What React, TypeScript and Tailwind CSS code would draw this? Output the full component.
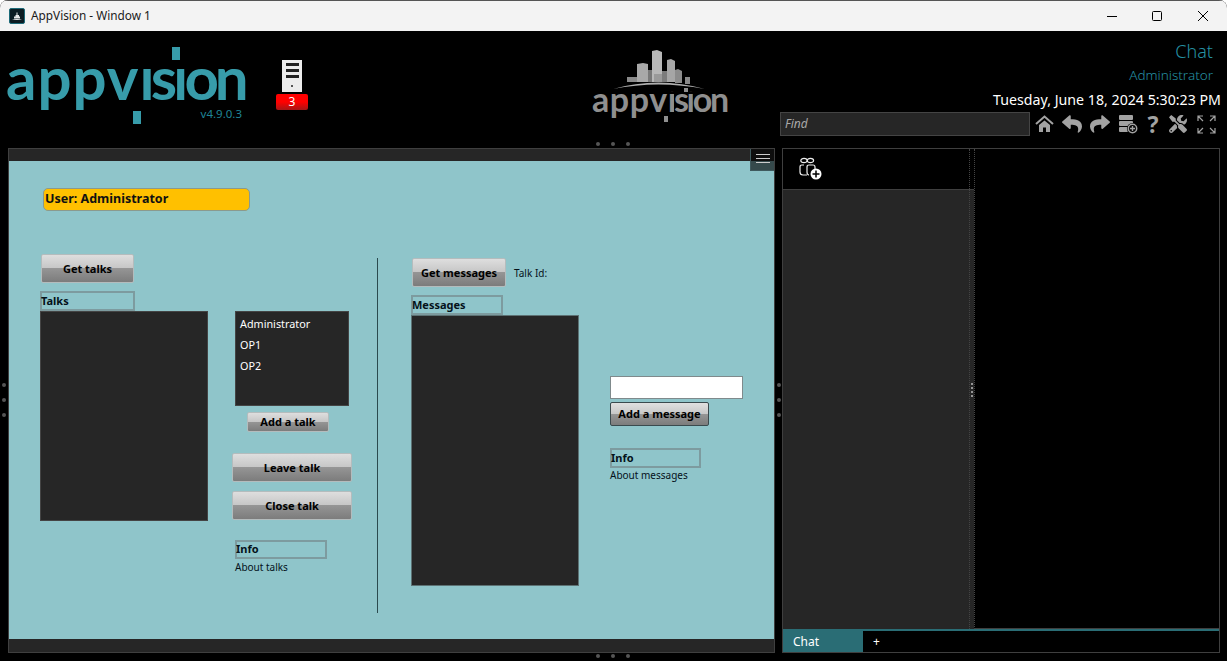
import { FaReply, FaShare, FaTools } from "react-icons/fa";

const FONT = "[font-family:'Noto_Sans','Open_Sans',sans-serif]";

function Btn({ label, className }: { label: string; className: string }) {
  return (
    <button className={`flex shrink-0 items-center justify-center rounded-[2px] border border-[#b4bcbd] bg-[linear-gradient(#dedede_0%,#c6c6c6_49%,#959595_50%,#7c7c7c_100%)] text-[11px] font-bold text-black ${className}`}>
      {label}
    </button>
  );
}

function LabelBox({ label, className }: { label: string; className: string }) {
  return (
    <div className={`flex shrink-0 items-center border-2 border-[#7d9b9f] pb-[2px] text-[11px] leading-none font-bold text-[#04121a] [text-indent:-1px] ${className}`}>
      {label}
    </div>
  );
}

function Dots({ className }: { className: string }) {
  return (
    <div className={`absolute z-10 flex gap-[11px] ${className}`}>
      <span className="size-[4px] rounded-full bg-[#555]" />
      <span className="size-[4px] rounded-full bg-[#555]" />
      <span className="size-[4px] rounded-full bg-[#555]" />
    </div>
  );
}

function AppLogo() {
  return (
    <div className="relative h-[78px] w-[240px] shrink-0">
      <div className="absolute top-0 left-[4px] text-[60px] leading-[60px] font-bold whitespace-nowrap text-[#379caa] [font-family:Lato,sans-serif]">
        <span className="tracking-[1px]">appv</span>
        <span className="tracking-[-4px]">
          <span className="inline-block [clip-path:inset(33%_0_0_0)]">i</span>s<span className="inline-block [clip-path:inset(33%_0_0_0)]">i</span>on
        </span>
      </div>
      <span className="absolute top-[0px] left-[170px] h-[13px] w-[8px] bg-[#379caa]" />
      <span className="absolute top-[64px] left-[131px] h-[13px] w-[8px] bg-[#379caa]" />
      <span className="absolute top-[58px] right-0 text-[11.5px] text-[#1f8597]">v4.9.0.3</span>
    </div>
  );
}

function CenterLogo() {
  return (
    <div className="relative h-[78px] w-[136px]">
      <svg className="absolute top-0 left-0" width="136" height="46" viewBox="0 0 136 46">
        <path d="M21 40Q66 27 113 40Q66 31 21 40Z" fill="#b0b0b0" />
        <path d="M35 33V28h10v5Z" fill="#8a8a8a" />
        <path d="M45 33V15l6-1 5 1v18Z" fill="#a8a8a8" />
        <path d="M56 33V21h4v12Z" fill="#787878" />
        <path d="M60 33V2l5-1 5 2v30Z" fill="#b8b8b8" />
        <path d="M62 33V25h12v8Z" fill="#9a9a9a" />
        <path d="M70 33V22h5v11Z" fill="#7c7c7c" />
        <path d="M75 33V11l4-1 4 2v21Z" fill="#a6a6a6" />
        <path d="M83 34V21l3-1 4 2v12Z" fill="#8c8c8c" />
        <path d="M93 35V28h5v7Z" fill="#8a8a8a" />
      </svg>
      <div className="absolute top-[30px] left-0 text-[34px] leading-[40px] font-bold whitespace-nowrap text-[#8f8f8f] [font-family:Lato,sans-serif]">
        <span className="tracking-[0.6px]">appv</span>
        <span className="tracking-[-2.4px]">
          <span className="inline-block [clip-path:inset(32%_0_0_0)]">i</span>s<span className="inline-block [clip-path:inset(32%_0_0_0)]">i</span>on
        </span>
      </div>
      <span className="absolute top-[67px] left-[72px] h-[6px] w-[4px] bg-[#8f8f8f]" />
      <span className="absolute top-[39px] left-[92px] h-[4px] w-[4px] bg-[#8f8f8f]" />
    </div>
  );
}

function ToolIcons() {
  return (
    <div className="ml-[5px] flex items-center text-[#a2a2a2]">
      <svg className="mr-[8px]" width="19" height="18" viewBox="0 0 19 18" fill="currentColor">
        <path d="M1 9L9.5 1.5L18 9" fill="none" stroke="currentColor" strokeWidth="2" />
        <path d="M4 10L9.5 5.5L15 10V17H11V12.5H8V17H4Z" />
      </svg>
      <FaReply className="mr-[8px]" size={20} />
      <FaShare className="mr-[8px]" size={20} />
      <svg className="mr-[7px]" width="20" height="20" viewBox="0 0 20 20" fill="currentColor">
        <rect x="1" y="1" width="14" height="5" rx="1" />
        <rect x="1" y="7" width="14" height="5" rx="1" />
        <rect x="1" y="13" width="9" height="5" rx="1" />
        <circle cx="14.5" cy="14.5" r="5.5" fill="#000" />
        <circle cx="14.5" cy="14.5" r="4.2" fill="none" stroke="currentColor" strokeWidth="1.5" />
        <path d="M14.5 12v5M12 14.5h5" stroke="currentColor" strokeWidth="1.4" />
      </svg>
      <span className="mr-[8px] w-[16px] text-center text-[23px] leading-none font-bold">?</span>
      <FaTools className="mr-[10px]" size={18} />
      <svg width="19" height="19" viewBox="0 0 19 19" fill="none" stroke="currentColor" strokeWidth="1.2">
        <path d="M1 6V1h5M1 1l5 5M13 1h5v5M18 1l-5 5M1 13v5h5M1 18l5-5M18 13v5h-5M18 18l-5-5" />
      </svg>
    </div>
  );
}

export default function App() {
  return (
    <div className={`relative flex h-[661px] w-[1227px] flex-col overflow-hidden rounded-t-[8px] bg-black ${FONT}`}>
      {/* title bar */}
      <div className="flex h-[31px] shrink-0 items-center border-t border-[#555] bg-[#f3f3f3] pl-[9px]">
        <svg width="16" height="16" viewBox="0 0 16 16">
          <rect x="0.5" y="0.5" width="15" height="15" rx="1.5" fill="#0c1c22" stroke="#1c6a78" />
          <path d="M3 12q5-2 10 0ZM5 10.5V8.5h1.5V7H7.5V4.5h1V7h1.5v1.5H11v2Z" fill="#e8e8e8" />
        </svg>
        <span className="ml-[6px] text-[11.8px] text-[#1a1a1a]">AppVision - Window 1</span>
        <div className="ml-auto flex h-full items-center text-black">
          <svg className="mr-[35px]" width="10" height="10" viewBox="0 0 10 10" stroke="currentColor"><path d="M0 5.5h10" /></svg>
          <svg className="mr-[36px]" width="10" height="10" viewBox="0 0 10 10" fill="none" stroke="currentColor"><rect x="0.5" y="0.5" width="9" height="9" rx="1" /></svg>
          <svg className="mr-[19px]" width="10" height="10" viewBox="0 0 10 10" stroke="currentColor"><path d="M0 0l10 10M10 0L0 10" /></svg>
        </div>
      </div>

      {/* header */}
      <div className="flex h-[117px] shrink-0">
        <div className="mt-[16px] ml-[2px]">
          <AppLogo />
        </div>
        <div className="mt-[29px] ml-[34px] flex w-[32px] flex-col items-center">
          <div className="flex h-[32px] w-[20px] flex-col items-center bg-[#ececec] pt-[3px]">
            <span className="h-[3px] w-[13px] bg-[#222]" />
            <span className="mt-[3px] h-[3px] w-[13px] bg-[#222]" />
            <span className="mt-[3px] h-[3px] w-[13px] bg-[#222]" />
            <span className="mt-[7px] size-[2px] rounded-full bg-[#222]" />
          </div>
          <div className="mt-[2px] flex h-[16px] w-[32px] items-center justify-center rounded-[2px] bg-[linear-gradient(#ff0000_50%,#a51616)] text-[12px] text-white">3</div>
        </div>
        <div className="mt-[18px] ml-[284px]">
          <CenterLogo />
        </div>
        <div className="mr-[6px] ml-auto flex w-[441px] flex-col items-end">
          <span className="mt-[6px] mr-[8px] text-[18px] leading-[28px] font-light text-[#2590a3]">Chat</span>
          <span className="mr-[8px] text-[13.5px] leading-[20px] font-light text-[#2590a3]">Administrator</span>
          <span className="mt-[5px] text-[14.2px] leading-[20px] text-white">Tuesday, June 18, 2024 5:30:23 PM</span>
          <div className="mt-[2px] flex w-full items-center">
            <div className="flex h-[24px] w-[250px] items-center border border-[#444] bg-[#262626] pl-[4px] text-[12px] text-[#a9a9a9] italic">Find</div>
            <ToolIcons />
          </div>
        </div>
      </div>

      {/* main */}
      <div className="flex min-h-0 flex-1 pr-[7px] pb-[8px] pl-[8px]">
        <div className="flex w-[767px] shrink-0 flex-col border border-[#3f3f3f] bg-[#262626]">
          <div className="relative z-10 h-[12px] shrink-0">
            <div className="absolute top-0 right-0 flex h-[22px] w-[24px] flex-col items-center gap-[3px] border-b border-l border-[#3f5a5e] bg-[#000000a0] pt-[5px]">
              <span className="h-px w-[14px] bg-[#ccc]" />
              <span className="h-px w-[14px] bg-[#ccc]" />
              <span className="h-px w-[14px] bg-[#ccc]" />
            </div>
          </div>
          <div className="flex min-h-0 flex-1 bg-[#8fc5ca] pl-[31px]">
            <div className="flex w-[168px] shrink-0 flex-col">
              <div className="mt-[27px] ml-[3px] flex h-[23px] w-[207px] shrink-0 items-center rounded-[5px] border border-[#8a9a8e] bg-[#ffc000] pl-px text-[12.5px] font-bold text-[#111]">
                User: Administrator
              </div>
              <Btn label="Get talks" className="mt-[43px] ml-px h-[29px] w-[93px] pt-[1px]" />
              <LabelBox label="Talks" className="mt-[8px] h-[20px] w-[95px]" />
              <div className="h-[210px] shrink-0 border border-[#444] bg-[#262626]" />
            </div>

            <div className="ml-[24px] flex w-[120px] shrink-0 flex-col">
              <div className="mt-[150px] ml-[3px] flex h-[95px] w-[114px] shrink-0 flex-col gap-[5px] border border-[#444] bg-[#262626] pt-[4px] pl-[4px] text-[10.8px] leading-[16px] text-white">
                <span>Administrator</span>
                <span>OP1</span>
                <span>OP2</span>
              </div>
              <Btn label="Add a talk" className="mt-[6px] ml-[15px] h-[20px] w-[82px]" />
              <Btn label="Leave talk" className="mt-[21px] h-[29px] w-[120px] pt-[1px]" />
              <Btn label="Close talk" className="mt-[9px] h-[29px] w-[120px] pt-[1px]" />
              <LabelBox label="Info" className="mt-[20px] ml-[3px] h-[19px] w-[92px]" />
              <span className="ml-[3px] text-[10px] leading-[16px] text-[#04121a]">About talks</span>
            </div>

            <div className="mt-[97px] ml-[25px] h-[355px] w-px shrink-0 bg-[#2b4a4e]" />

            <div className="ml-[33px] flex w-[168px] shrink-0 flex-col">
              <div className="mt-[97px] flex items-center">
                <Btn label="Get messages" className="ml-px h-[29px] w-[94px] pt-[1px]" />
                <span className="mt-[1px] ml-[8px] text-[10px] text-[#04121a]">Talk Id:</span>
              </div>
              <LabelBox label="Messages" className="mt-[8px] h-[20px] w-[92px]" />
              <div className="h-[271px] shrink-0 border border-[#5d7274] bg-[#262626]" />
            </div>

            <div className="ml-[31px] flex w-[133px] shrink-0 flex-col">
              <input className="mt-[215px] h-[23px] w-[133px] shrink-0 border border-[#7f8a8c] bg-white" />
              <button className="mt-[3px] flex h-[24px] w-[99px] shrink-0 items-center justify-center rounded-[2px] border border-[#3a4a4e] bg-[linear-gradient(#e0e0e0_0%,#c8c8c8_49%,#969696_50%,#7c7c7c_100%)] pt-[1px] text-[11px] font-bold text-black">
                Add a message
              </button>
              <LabelBox label="Info" className="mt-[22px] h-[20px] w-[91px]" />
              <span className="text-[10px] leading-[15px] text-[#04121a]">About messages</span>
            </div>
          </div>
          <div className="h-[13px] shrink-0" />
        </div>

        <div className="ml-[7px] flex min-w-0 flex-1 flex-col border border-[#3f3f3f]">
          <div className="flex min-h-0 flex-1">
            <div className="relative flex w-[191px] shrink-0 flex-col">
              <div className="flex h-[41px] shrink-0 items-center border-b border-[#3f3f3f] pl-[16px]">
                <svg width="24" height="24" viewBox="0 0 24 24" fill="none" stroke="#eee" strokeWidth="1.2">
                  <ellipse cx="5" cy="3.5" rx="3.2" ry="2.2" />
                  <ellipse cx="11.4" cy="3.5" rx="3.2" ry="2.2" />
                  <path d="M5 8H3Q1 8 1 10V15Q1 18 4 18H8" />
                  <path d="M10 18Q8 18 8 15V10Q8 8 10 8H14Q16 8 16 10V12" />
                  <circle cx="17" cy="17" r="5.5" fill="#fff" stroke="none" />
                  <path d="M17 13.5v7M13.5 17h7" stroke="#000" strokeWidth="1.5" />
                </svg>
              </div>
              <div className="min-h-0 flex-1 bg-[#262626]" />
              <div className="absolute top-0 right-[4px] bottom-0 border-l border-dotted border-[#444]" />
            </div>
            <div className="w-px shrink-0 border-l border-dotted border-[#444]" />
          </div>
          <div className="flex h-[23px] shrink-0 items-stretch border-t-2 border-[#2a6d75] shadow-[0_-1px_0_#3f3f3f]">
            <div className="flex w-[80px] items-center bg-[#2a6d75] pt-[1px] pl-[10px] text-[12px] text-white">Chat</div>
            <div className="flex items-center pl-[10px] text-[12px] text-white">+</div>
          </div>
        </div>
      </div>

      {/* splitter handles */}
      <Dots className="top-[142px] left-[596px]" />
      <Dots className="top-[654px] left-[596px]" />
      <div className="absolute top-[383px] left-[2px] flex flex-col gap-[11px]">
        <span className="size-[4px] rounded-full bg-[#555]" />
        <span className="size-[4px] rounded-full bg-[#555]" />
        <span className="size-[4px] rounded-full bg-[#555]" />
      </div>
      <div className="absolute top-[383px] left-[777px] flex flex-col gap-[11px]">
        <span className="size-[4px] rounded-full bg-[#555]" />
        <span className="size-[4px] rounded-full bg-[#555]" />
        <span className="size-[4px] rounded-full bg-[#555]" />
      </div>
      <div className="absolute top-[383px] left-[971px] flex flex-col gap-[2px]">
        <span className="size-[2px] rounded-full bg-[#bbb]" />
        <span className="size-[2px] rounded-full bg-[#bbb]" />
        <span className="size-[2px] rounded-full bg-[#bbb]" />
        <span className="size-[2px] rounded-full bg-[#bbb]" />
      </div>
    </div>
  );
}
